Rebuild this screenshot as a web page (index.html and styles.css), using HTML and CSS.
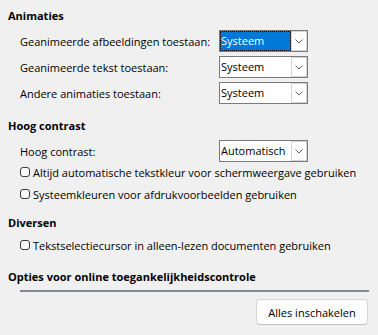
FILE: index.html
```html
<!DOCTYPE html>
<html lang="nl">
<head>
<meta charset="utf-8">
<title>Toegankelijkheid</title>
<link rel="stylesheet" href="styles.css">
</head>
<body>
<div class="page">
  <section class="group">
    <h2 class="heading">Animaties</h2>
    <div class="rows">
      <div class="row">
        <span class="label">Geanimeerde afbeeldingen toestaan:</span>
        <div class="select focused"><span class="value">Systeem</span><span class="arrow"><svg width="8" height="5" viewBox="0 0 8 5"><polyline points="0.5,0.5 4,4 7.5,0.5" fill="none" stroke="#606060" stroke-width="1"/></svg></span></div>
      </div>
      <div class="row">
        <span class="label">Geanimeerde tekst toestaan:</span>
        <div class="select"><span class="value">Systeem</span><span class="arrow"><svg width="8" height="5" viewBox="0 0 8 5"><polyline points="0.5,0.5 4,4 7.5,0.5" fill="none" stroke="#606060" stroke-width="1"/></svg></span></div>
      </div>
      <div class="row">
        <span class="label">Andere animaties toestaan:</span>
        <div class="select"><span class="value">Systeem</span><span class="arrow"><svg width="8" height="5" viewBox="0 0 8 5"><polyline points="0.5,0.5 4,4 7.5,0.5" fill="none" stroke="#606060" stroke-width="1"/></svg></span></div>
      </div>
    </div>
  </section>

  <section class="group group-contrast">
    <h2 class="heading">Hoog contrast</h2>
    <div class="rows">
      <div class="row">
        <span class="label">Hoog contrast:</span>
        <div class="select"><span class="value">Automatisch</span><span class="arrow"><svg width="8" height="5" viewBox="0 0 8 5"><polyline points="0.5,0.5 4,4 7.5,0.5" fill="none" stroke="#606060" stroke-width="1"/></svg></span></div>
      </div>
    </div>
    <div class="checks checks-contrast">
      <label class="check"><span class="box"></span><span>Altijd automatische tekstkleur voor schermweergave gebruiken</span></label>
      <label class="check"><span class="box"></span><span>Systeemkleuren voor afdrukvoorbeelden gebruiken</span></label>
    </div>
  </section>

  <section class="group group-misc">
    <h2 class="heading">Diversen</h2>
    <div class="checks checks-misc">
      <label class="check"><span class="box"></span><span>Tekstselectiecursor in alleen-lezen documenten gebruiken</span></label>
    </div>
  </section>

  <section class="group group-online">
    <h2 class="heading">Opties voor online toegankelijkheidscontrole</h2>
    <div class="sep"></div>
    <div class="actions">
      <button class="btn" type="button">Alles inschakelen</button>
    </div>
  </section>
</div>
</body>
</html>
```

FILE: styles.css
```css
html, body {
  margin: 0;
  padding: 0;
}

body {
  width: 378px;
  height: 335px;
  overflow: hidden;
  background: #f0f0f0;
  color: #000;
  font-family: "Open Sans", "Noto Sans", sans-serif;
  font-size: 11px;
}

.page {
  padding: 7px 8px 0 8px;
}

.heading {
  margin: 0;
  font-size: 11px;
  font-weight: 700;
  line-height: 18px;
}

.group-contrast {
  margin-top: 13px;
}

.group-misc {
  margin-top: 9px;
}

.group-online {
  margin-top: 12px;
}

.rows {
  display: flex;
  flex-direction: column;
  gap: 4px;
  margin-top: 5px;
  padding-left: 12px;
}

.row {
  display: flex;
  align-items: center;
  height: 22px;
}

.label {
  width: 199px;
  flex: none;
  white-space: nowrap;
}

.select {
  width: 89px;
  height: 22px;
  box-sizing: border-box;
  border: 1px solid #7a7a7a;
  background: #fff;
  display: flex;
}

.value {
  flex: 1;
  box-sizing: border-box;
  padding-left: 1px;
  line-height: 20px;
  white-space: nowrap;
  overflow: hidden;
}

.focused .value {
  background: #0078d7;
  color: #fff;
  border: 1px dotted #000;
  line-height: 18px;
  padding-left: 0;
}

.arrow {
  width: 16px;
  flex: none;
  box-sizing: border-box;
  border: 1px solid #d4d4d4;
  background: #fff;
  display: flex;
  align-items: center;
  justify-content: center;
}

.checks {
  padding-left: 12px;
  display: flex;
  flex-direction: column;
}

.checks-contrast {
  margin-top: -1px;
}

.checks-misc {
  margin-top: 2px;
}

.check {
  display: flex;
  align-items: center;
  gap: 3px;
  height: 22px;
  white-space: nowrap;
}

.box {
  width: 10px;
  height: 10px;
  box-sizing: border-box;
  border: 1px solid #3a3a3a;
  border-radius: 3px;
  background: #f9f9f9;
  flex: none;
}

.sep {
  height: 2px;
  margin: 4px 1px 0 12px;
  background: #878a91;
}

.actions {
  display: flex;
  justify-content: flex-end;
  margin-top: 7px;
  padding-right: 2px;
}

.btn {
  width: 112px;
  height: 26px;
  box-sizing: border-box;
  border: 1px solid #d6d6d6;
  border-bottom-color: #c2c2c2;
  border-radius: 4px;
  background: #fdfdfd;
  color: #000;
  font-family: inherit;
  font-size: 11px;
  padding: 0;
}
```
